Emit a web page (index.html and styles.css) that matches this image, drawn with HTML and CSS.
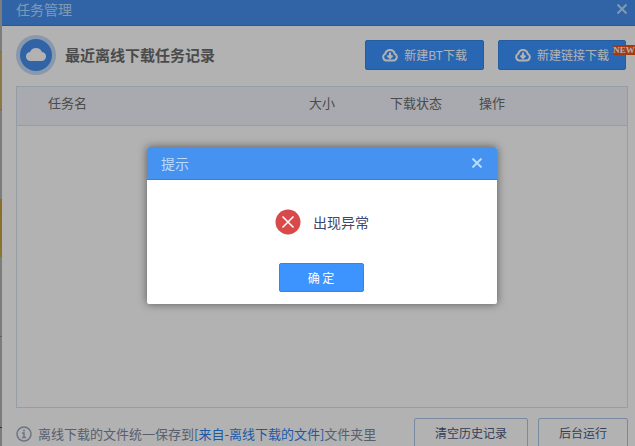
FILE: index.html
```html
<!DOCTYPE html>
<html lang="zh-CN">
<head>
<meta charset="utf-8">
<title>任务管理</title>
<link rel="stylesheet" href="styles.css">
</head>
<body>
<div class="backdrop-strip"></div>
<main class="window">
  <header class="titlebar">
    <h1 class="titlebar-text">任务管理</h1>
    <button class="close" type="button" aria-label="关闭"><svg width="10" height="10" viewBox="0 0 10 10"><path d="M0.500 0.500l9 9M9.500 0.500l-9 9"/></svg></button>
  </header>
  <section class="toolbar">
    <svg class="logo" width="40" height="40" viewBox="0 0 40 40">
      <circle cx="20" cy="20" r="20" fill="#c3daf8"/>
      <circle cx="20" cy="20" r="16" fill="#4590ee"/>
      <path d="M10 21.500a4.500 4.500 0 0 1 4-4.600 6.500 6.500 0 0 1 12 0 4.500 4.500 0 0 1 4 4.600 4.500 4.500 0 0 1-4.500 4.500h-11a4.500 4.500 0 0 1-4.500-4.500z" fill="#fff"/>
    </svg>
    <h2 class="heading">最近离线下载任务记录</h2>
    <div class="actions">
      <button class="primary create" type="button">
        <svg class="cloud" width="16" height="14" viewBox="0 0 16 14"><path d="M4.500 12.500h7a3.500 3.500 0 0 0 1.200-6.700 4.800 4.800 0 0 0-9.400 0 3.500 3.500 0 0 0 1.200 6.700zM8 4.500v5M5.500 7.500L8 10l2.500-2.500"/></svg>
        <span>新建BT下载</span>
      </button>
      <button class="primary create" type="button">
        <svg class="cloud" width="16" height="14" viewBox="0 0 16 14"><path d="M4.500 12.500h7a3.500 3.500 0 0 0 1.200-6.700 4.800 4.800 0 0 0-9.400 0 3.500 3.500 0 0 0 1.200 6.700zM8 4.500v5M5.500 7.500L8 10l2.500-2.500"/></svg>
        <span>新建链接下载</span>
        <span class="badge">NEW</span>
      </button>
    </div>
  </section>
  <section class="panel">
    <table class="tasks">
      <thead>
        <tr><th class="col-name">任务名</th><th class="col-size">大小</th><th class="col-status">下载状态</th><th class="col-action">操作</th></tr>
      </thead>
    </table>
  </section>
  <footer class="footer">
    <p class="note">
      <svg class="info" width="16" height="16" viewBox="0 0 16 16"><circle cx="8" cy="8" r="7"/><path d="M8 3.500v2M6 7h2v4.500M6 11.500h4"/></svg>
      <span>离线下载的文件统一保存到<a class="link" href="#">[来自-离线下载的文件]</a>文件夹里</span>
    </p>
    <button class="secondary clear" type="button">清空历史记录</button>
    <button class="secondary" type="button">后台运行</button>
  </footer>
  <div class="overlay">
    <div class="dialog" role="dialog" aria-modal="true" aria-labelledby="dialog-title">
      <header class="dialog-header">
        <h2 class="dialog-title" id="dialog-title">提示</h2>
        <button class="close" type="button" aria-label="关闭"><svg width="10" height="10" viewBox="0 0 10 10"><path d="M0.500 0.500l9 9M9.500 0.500l-9 9"/></svg></button>
      </header>
      <div class="dialog-body">
        <p class="message">
          <svg width="26" height="26" viewBox="0 0 26 26"><circle cx="13" cy="13" r="12.500" fill="#d84a4a"/><path d="M7.500 7.500l11 11M18.500 7.500l-11 11" stroke="#fff" stroke-width="1.500"/></svg>
          <span>出现异常</span>
        </p>
        <button class="primary confirm" type="button">确 定</button>
      </div>
    </div>
  </div>
</main>
</body>
</html>
```
FILE: styles.css
```css
* {
  box-sizing: border-box;
}

body {
  margin: 0;
  height: 100vh;
  display: flex;
  overflow: hidden;
  font-family: "Noto Sans CJK SC", "Liberation Sans", sans-serif;
  font-size: 13px;
  line-height: 18px;
}

h1, h2, p {
  margin: 0;
  font-weight: 400;
}

button {
  font-family: inherit;
  font-size: 12px;
  line-height: 18px;
  padding: 0;
  white-space: nowrap;
}

.backdrop-strip {
  width: 2px;
  background: linear-gradient(
    #7c7c7c 51px, #8a6d38 51px, #8a7848 53px, #8a7848 109px, #8a6038 109px,
    #7c7c7c 111px, #7c7c7c 199px, #8a6d28 199px, #8a7530 257px, #7c7c7c 257px,
    #7c7c7c 336px, #606060 336px, #606060 337px, #7c7c7c 337px, #7c7c7c 427px,
    #303030 427px, #303030 428px, #7c7c7c 428px);
}

.window {
  position: relative;
  flex: 1;
  min-width: 0;
  display: flex;
  flex-direction: column;
  background: #fff;
}

.titlebar {
  display: flex;
  justify-content: space-between;
  align-items: flex-start;
  height: 26px;
  padding: 0 8px 0 14px;
  background: #4590f0;
  border-bottom: 1px solid #3580df;
}

.titlebar-text,
.dialog-title {
  font-size: 14px;
  color: #b8dcff;
}

.close {
  display: flex;
  align-items: center;
  height: 18px;
  border: 0;
  background: none;
}

.close path {
  fill: none;
  stroke: #b8dcff;
  stroke-width: 2;
}

.toolbar {
  display: flex;
  align-items: center;
  height: 60px;
  padding: 0 9px 2px 14px;
}

.heading {
  margin-left: 9px;
  font-size: 15px;
  font-weight: 700;
  color: #6c6c6c;
}

.actions {
  display: flex;
  gap: 14px;
  margin-left: auto;
}

.primary {
  height: 30px;
  border: 1px solid #3585e5;
  border-radius: 2px;
  background: #3d94ff;
  color: #fff;
}

.create {
  position: relative;
  display: flex;
  align-items: center;
  gap: 6px;
  padding: 0 16px;
}

.cloud path {
  fill: none;
  stroke: #fff;
  stroke-width: 2;
}

.badge {
  position: absolute;
  top: 4px;
  right: -10px;
  width: 22px;
  height: 10px;
  background: #ec5418;
  font: 700 9px/10px "Liberation Serif", serif;
  text-align: center;
}

.panel {
  flex: 1;
  margin: 0 7px 10px 14px;
  border: 1px solid #d6e2f0;
}

.tasks {
  width: 100%;
  table-layout: fixed;
  border-collapse: collapse;
}

.tasks th {
  height: 38px;
  padding: 0 0 5px;
  background: #f3f4fb;
  border-bottom: 1px solid #d6e2f0;
  color: #6c6c6c;
  font-weight: 400;
  text-align: left;
}

.tasks .col-name {
  padding-left: 31px;
}

.col-size {
  width: 81px;
}

.col-status {
  width: 89px;
}

.col-action {
  width: 148px;
}

.footer {
  display: flex;
  align-items: flex-start;
  gap: 10px;
  height: 28px;
  padding: 0 7px 0 14px;
}

.note {
  display: flex;
  align-items: center;
  gap: 6px;
  height: 32px;
  margin-right: auto;
  color: #8088a0;
  white-space: nowrap;
}

.info {
  fill: none;
  stroke: #9aa5bd;
  stroke-width: 1.5;
}

.link {
  color: #2c7ff0;
  text-decoration: none;
}

.secondary {
  width: 90px;
  height: 30px;
  border: 1px solid #aec6e6;
  border-radius: 2px;
  background: #fff;
  color: #4b587f;
}

.clear {
  width: 114px;
}

.overlay {
  position: absolute;
  inset: 0;
  display: flex;
  align-items: center;
  justify-content: center;
  padding: 5px 0 0 7px;
  background: rgba(0, 0, 0, 0.3);
}

.dialog {
  width: 350px;
  border-radius: 2px;
  overflow: hidden;
  background: #fff;
  box-shadow: 0 0 8px rgba(0, 0, 0, 0.5);
}

.dialog-header {
  display: flex;
  align-items: center;
  justify-content: space-between;
  height: 33px;
  padding: 0 15px 0 14px;
  background: #4592f0;
  border-bottom: 1px solid #3580df;
}

.dialog-body {
  display: flex;
  flex-direction: column;
  align-items: center;
  gap: 28px;
  padding: 29px 0 12px;
}

.message {
  display: flex;
  align-items: center;
  gap: 12px;
  font-size: 14px;
  color: #3c4870;
}

.message svg {
  fill: none;
}

.confirm {
  width: 85px;
  height: 29px;
  margin-right: 2px;
}
```
